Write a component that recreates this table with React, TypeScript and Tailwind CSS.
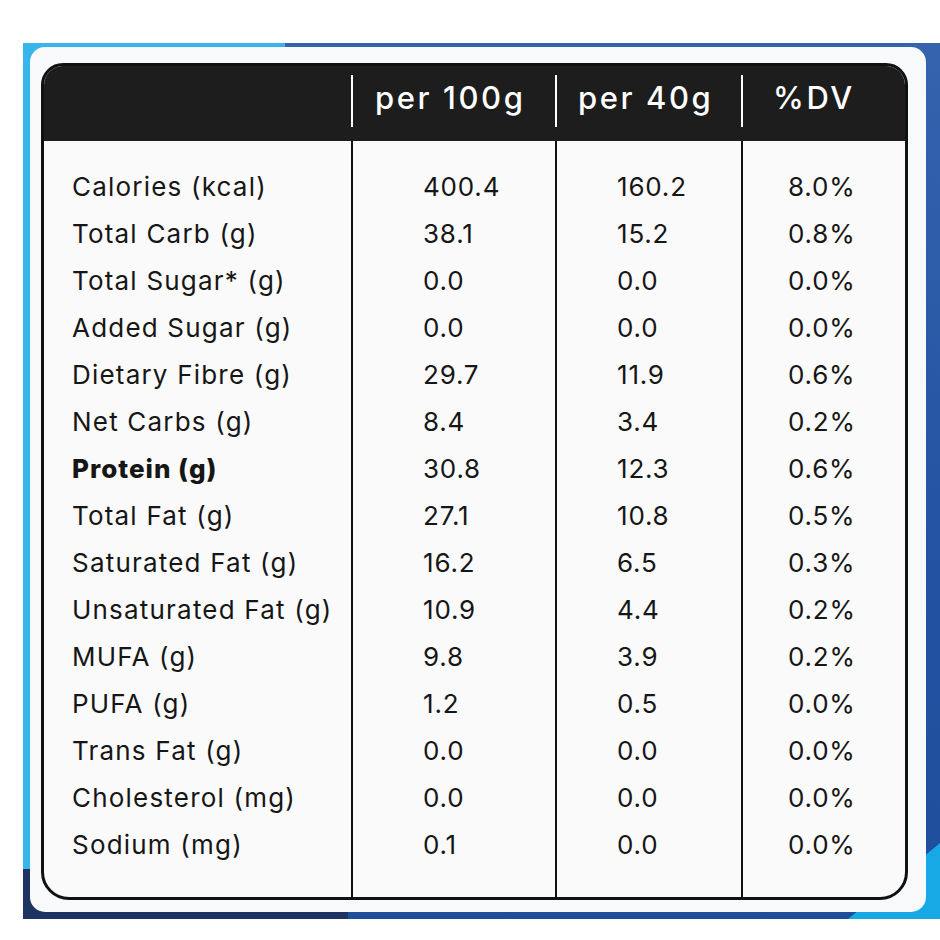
import React from "react";

const rows: [string, string, string, string][] = [
  ["Calories (kcal)", "400.4", "160.2", "8.0%"],
  ["Total Carb (g)", "38.1", "15.2", "0.8%"],
  ["Total Sugar* (g)", "0.0", "0.0", "0.0%"],
  ["Added Sugar (g)", "0.0", "0.0", "0.0%"],
  ["Dietary Fibre (g)", "29.7", "11.9", "0.6%"],
  ["Net Carbs (g)", "8.4", "3.4", "0.2%"],
  ["Protein (g)", "30.8", "12.3", "0.6%"],
  ["Total Fat (g)", "27.1", "10.8", "0.5%"],
  ["Saturated Fat (g)", "16.2", "6.5", "0.3%"],
  ["Unsaturated Fat (g)", "10.9", "4.4", "0.2%"],
  ["MUFA (g)", "9.8", "3.9", "0.2%"],
  ["PUFA (g)", "1.2", "0.5", "0.0%"],
  ["Trans Fat (g)", "0.0", "0.0", "0.0%"],
  ["Cholesterol (mg)", "0.0", "0.0", "0.0%"],
  ["Sodium (mg)", "0.1", "0.0", "0.0%"],
];

export default function App() {
  return (
    <div className="w-[940px] h-[940px] bg-white pt-[43px] pl-[23px] font-['Inter',sans-serif] text-[#161616]">
      <div className="relative w-[917px] h-[876px] overflow-hidden bg-[linear-gradient(180deg,#3563ad_0%,#2352a3_60%,#1f4e9c_100%)] pt-[4px] pl-[7px] pr-[14px] pb-[7px]">
        <div className="absolute left-0 top-0 w-[262px] h-[827px] bg-[#38b6ec]" />
        <div className="absolute left-0 bottom-0 w-[325px] h-[50px] bg-[#1d3463]" />
        <div className="absolute right-0 bottom-0 w-[92px] h-[76px] bg-[#16a9e6] [clip-path:polygon(0_100%,100%_100%,100%_0)]" />
        <div className="relative h-full rounded-[15px] bg-[#f8f9fa] pt-[16px] pl-[11px] pr-[18px] pb-[12px]">
          <div className="flex flex-col h-full border-[3px] border-[#111] rounded-t-[22px] rounded-b-[28px] overflow-hidden bg-[#fafafa]">
            <div className="h-[75px] shrink-0 bg-[#1d1d1d] grid grid-cols-[307px_204px_186px_1fr] items-start text-white text-[31px] tracking-[2.6px] font-medium">
              <div />
              <div className="mt-[9px] h-[52px] border-l-2 border-white flex items-center pl-[22px] pb-[8px] leading-none">per 100g</div>
              <div className="mt-[9px] h-[52px] border-l-2 border-white flex items-center pl-[21px] pb-[8px] leading-none">per 40g</div>
              <div className="mt-[9px] h-[52px] border-l-2 border-white flex items-center pl-[30px] pb-[8px] leading-none">%DV</div>
            </div>
            <div className="flex-1 grid grid-cols-[307px_204px_186px_1fr] text-[26px] tracking-[1.2px]">
              <div className="flex flex-col pt-[22px] pl-[28px]">
                {rows.map((r) => (
                  <div key={r[0]} className={"h-[47px] flex items-center " + (r[0] === "Protein (g)" ? "font-extrabold tracking-[1px]" : "")}>
                    {r[0]}
                  </div>
                ))}
              </div>
              <div className="flex flex-col pt-[22px] pl-[70px] border-l-2 border-[#111]">
                {rows.map((r) => (
                  <div key={r[0]} className="h-[47px] flex items-center tracking-[0.8px]">{r[1]}</div>
                ))}
              </div>
              <div className="flex flex-col pt-[22px] pl-[60px] border-l-2 border-[#111]">
                {rows.map((r) => (
                  <div key={r[0]} className="h-[47px] flex items-center tracking-[0.8px]">{r[2]}</div>
                ))}
              </div>
              <div className="flex flex-col pt-[22px] pl-[45px] border-l-2 border-[#111]">
                {rows.map((r) => (
                  <div key={r[0]} className="h-[47px] flex items-center tracking-[0.8px]">{r[3]}</div>
                ))}
              </div>
            </div>
          </div>
        </div>
      </div>
    </div>
  );
}
